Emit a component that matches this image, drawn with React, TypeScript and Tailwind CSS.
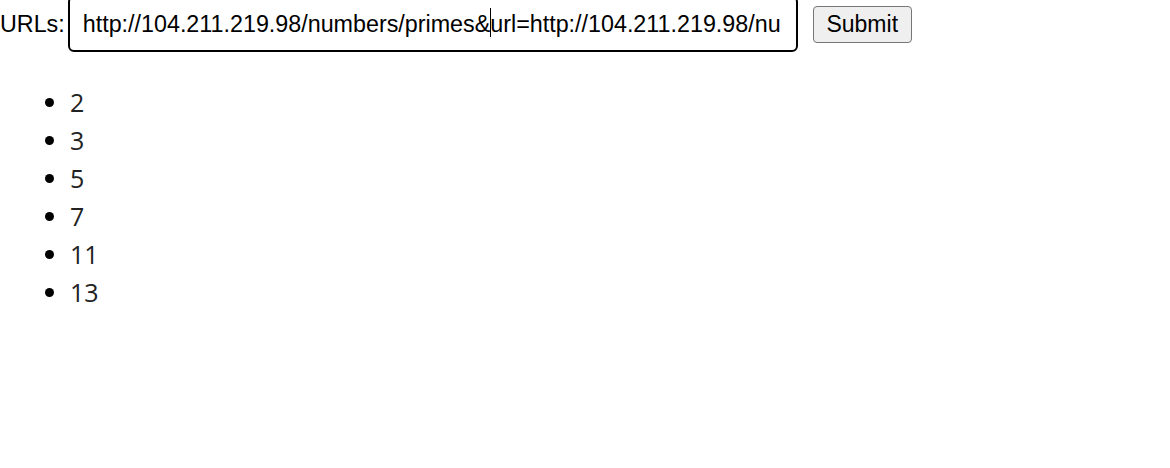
import React, { useState } from "react";

const primes = [2, 3, 5, 7, 11, 13];

const App = () => {
  const [urls, setUrls] = useState(
    "http://104.211.219.98/numbers/primes&url=http://104.211.219.98/numbers/odd"
  );

  return (
    <div className="bg-white w-[1170px] h-[468px] overflow-hidden">
      {/* Form row */}
      <form
        className="flex items-center -mt-[4px] h-[56px]"
        style={{ fontFamily: "Arial, 'Liberation Sans', sans-serif" }}
        onSubmit={(e) => e.preventDefault()}
      >
        <label className="text-[23.3px] text-black mr-[3px]">URLs:</label>
        <div className="relative">
          <input
            type="text"
            value={urls}
            onChange={(e) => setUrls(e.target.value)}
            className="w-[730px] h-[56px] border-2 border-black rounded-[6px] pl-[13px] pr-[15px] text-[23.3px] text-black bg-white outline-none"
          />
          {/* caret */}
          <span className="absolute left-[422px] top-[12px] w-[1px] h-[29px] bg-black" />
        </div>
        <button
          type="submit"
          className="ml-[15px] w-[99px] h-[37px] bg-[#efefef] border border-[#767676] rounded-[4px] text-[23px] text-black leading-none"
        >
          Submit
        </button>
      </form>

      {/* Results */}
      <ul
        className="list-disc pl-[70px] mt-[31px] text-[25px] leading-[38px] text-[#222] marker:text-black"
        style={{ fontFamily: "'Open Sans', sans-serif" }}
      >
        {primes.map((p) => (
          <li key={p}>{p}</li>
        ))}
      </ul>
    </div>
  );
};

export default App;
